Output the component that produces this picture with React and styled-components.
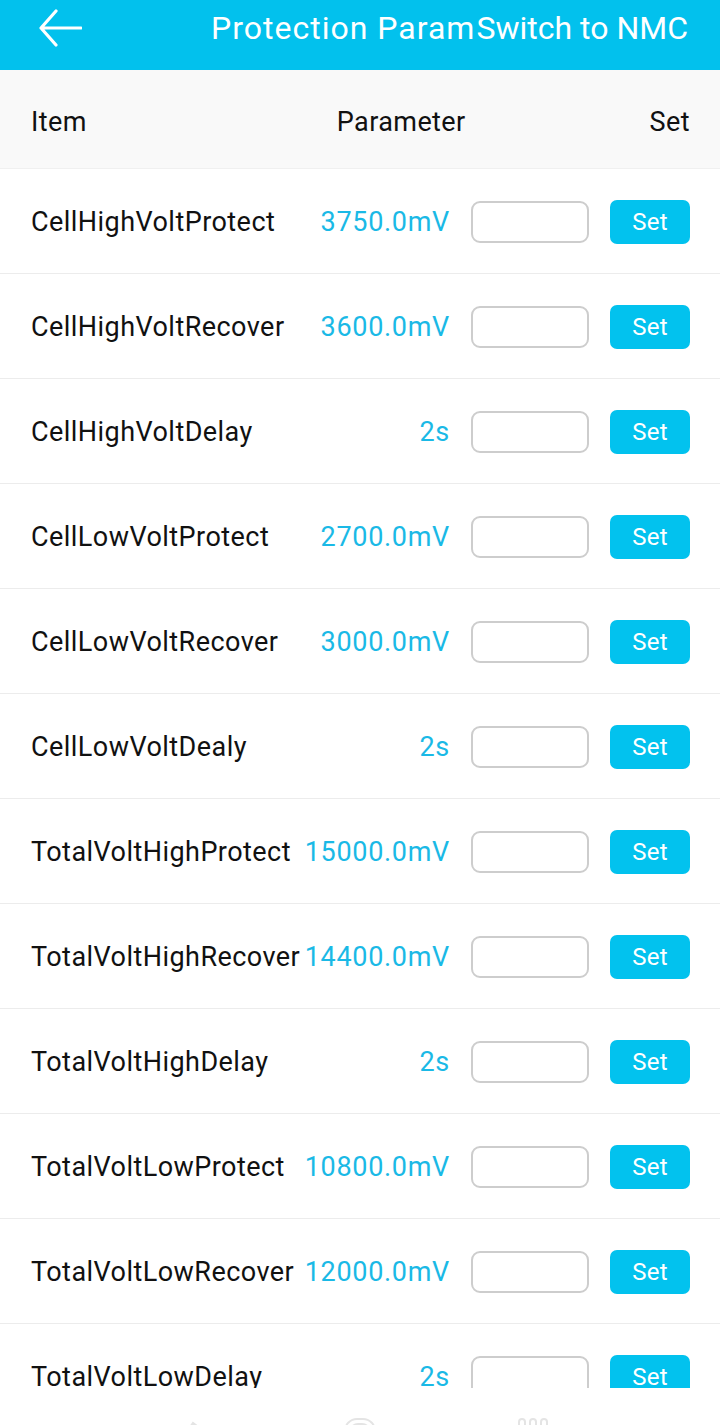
import React from "react";
import styled, { createGlobalStyle } from "styled-components";

const GlobalStyle = createGlobalStyle`
    html, body {
        margin: 0;
        padding: 0;
        background: #ffffff;
        font-family: Roboto, "Liberation Sans", sans-serif;
    }
`
const Page = styled.div`
    width: 720px;
    height: 1425px;
    overflow: hidden;
    display: flex;
    flex-direction: column;
    background: #ffffff;
`
const TopBar = styled.header`
    height: 70px;
    flex: 0 0 70px;
    box-sizing: border-box;
    padding: 0 32px 14px 38px;
    background: #02c1ed;
    display: flex;
    align-items: center;
    color: #ffffff;
`
const BackButton = styled.div`
    width: 46px;
    height: 38px;
    display: flex;
    align-items: center;
`
const TitleBox = styled.div`
    flex: 1;
    display: flex;
    align-items: center;
    overflow: hidden;
    padding-left: 127px;
`
const Title = styled.div`
    flex: 1;
    overflow: hidden;
    white-space: nowrap;
    font-size: 32px;
    letter-spacing: 1px;
    line-height: 40px;
`
const SwitchLink = styled.div`
    font-size: 32px;
    letter-spacing: 0;
    line-height: 40px;
    white-space: nowrap;
`
const TableHead = styled.div`
    height: 98px;
    flex: 0 0 98px;
    box-sizing: border-box;
    padding: 5px 30px 0 31px;
    background: #f9f9f9;
    display: flex;
    align-items: center;
    font-size: 27px;
    letter-spacing: 0.4px;
    color: #111111;
`
const HeadItem = styled.div`
    flex: 1;
`
const HeadSet = styled.div`
    margin-left: 184px;
`
const List = styled.div`
    height: 1219px;
    flex: 0 0 1219px;
    overflow: hidden;
    border-top: 1px solid #f0f0f0;
`
const Row = styled.div`
    height: 104px;
    display: flex;
    align-items: center;
    padding: 1px 30px 0 31px;
    box-sizing: border-box;
    height: 105px;
    border-bottom: 1px solid #ececec;
`
const Label = styled.div`
    width: 269px;
    flex: 0 0 269px;
    white-space: nowrap;
    font-size: 27px;
    letter-spacing: 0.45px;
    color: #111111;
`
const Value = styled.div`
    width: 150px;
    flex: 0 0 150px;
    text-align: right;
    white-space: nowrap;
    font-size: 27px;
    letter-spacing: 0.7px;
    color: #1ab9e6;
`
const Input = styled.div`
    width: 118px;
    height: 42px;
    box-sizing: border-box;
    margin-left: 21px;
    border: 2px solid #cdcdcd;
    border-radius: 9px;
    background: #ffffff;
`
const SetButton = styled.div`
    width: 80px;
    height: 44px;
    margin-left: 21px;
    border-radius: 7px;
    background: #02c2ee;
    color: #ffffff;
    font-size: 24px;
    letter-spacing: 0.3px;
    display: flex;
    align-items: center;
    justify-content: center;
`
const TabBar = styled.div`
    flex: 1;
    display: flex;
    justify-content: space-around;
    padding: 29px 100px 0 100px;
`
const TabIcon = styled.div`
    width: 40px;
    height: 40px;
    display: flex;
    justify-content: center;
`

const params = [
    { name: "CellHighVoltProtect", value: "3750.0mV" },
    { name: "CellHighVoltRecover", value: "3600.0mV" },
    { name: "CellHighVoltDelay", value: "2s" },
    { name: "CellLowVoltProtect", value: "2700.0mV" },
    { name: "CellLowVoltRecover", value: "3000.0mV" },
    { name: "CellLowVoltDealy", value: "2s" },
    { name: "TotalVoltHighProtect", value: "15000.0mV" },
    { name: "TotalVoltHighRecover", value: "14400.0mV" },
    { name: "TotalVoltHighDelay", value: "2s" },
    { name: "TotalVoltLowProtect", value: "10800.0mV" },
    { name: "TotalVoltLowRecover", value: "12000.0mV" },
    { name: "TotalVoltLowDelay", value: "2s" },
]

const App = () => {
    return (
        <Page>
            <GlobalStyle />
            <TopBar>
                <BackButton>
                    <svg width="44" height="38" viewBox="0 0 44 38" fill="none">
                        <path d="M18 2 L3 19 L18 36 M3 19 H43" stroke="#ffffff" strokeWidth="3.2" strokeLinecap="round" strokeLinejoin="round" />
                    </svg>
                </BackButton>
                <TitleBox>
                    <Title>Protection Parameters</Title>
                    <SwitchLink>Switch to NMC</SwitchLink>
                </TitleBox>
            </TopBar>
            <TableHead>
                <HeadItem>Item</HeadItem>
                <div>Parameter</div>
                <HeadSet>Set</HeadSet>
            </TableHead>
            <List>
                {params.map((p) => (
                    <Row key={p.name}>
                        <Label>{p.name}</Label>
                        <Value>{p.value}</Value>
                        <Input />
                        <SetButton>Set</SetButton>
                    </Row>
                ))}
            </List>
            <TabBar>
                <TabIcon>
                    <svg width="40" height="40" viewBox="0 0 40 40" fill="none">
                        <path d="M10 28 L26 6 L30 9 L14 31 Z" stroke="#e4e4e4" strokeWidth="2" />
                    </svg>
                </TabIcon>
                <TabIcon>
                    <svg width="40" height="40" viewBox="0 0 40 40" fill="none">
                        <rect x="5" y="2" width="30" height="30" rx="12" stroke="#e4e4e4" strokeWidth="2" />
                        <rect x="10" y="7" width="20" height="20" rx="8" stroke="#e4e4e4" strokeWidth="2" />
                    </svg>
                </TabIcon>
                <TabIcon>
                    <svg width="40" height="40" viewBox="0 0 40 40" fill="none">
                        <rect x="6" y="2" width="6" height="30" rx="3" stroke="#e4e4e4" strokeWidth="2" />
                        <rect x="17" y="2" width="6" height="30" rx="3" stroke="#e4e4e4" strokeWidth="2" />
                        <rect x="28" y="2" width="6" height="30" rx="3" stroke="#e4e4e4" strokeWidth="2" />
                    </svg>
                </TabIcon>
            </TabBar>
        </Page>
    )
}
export default App
